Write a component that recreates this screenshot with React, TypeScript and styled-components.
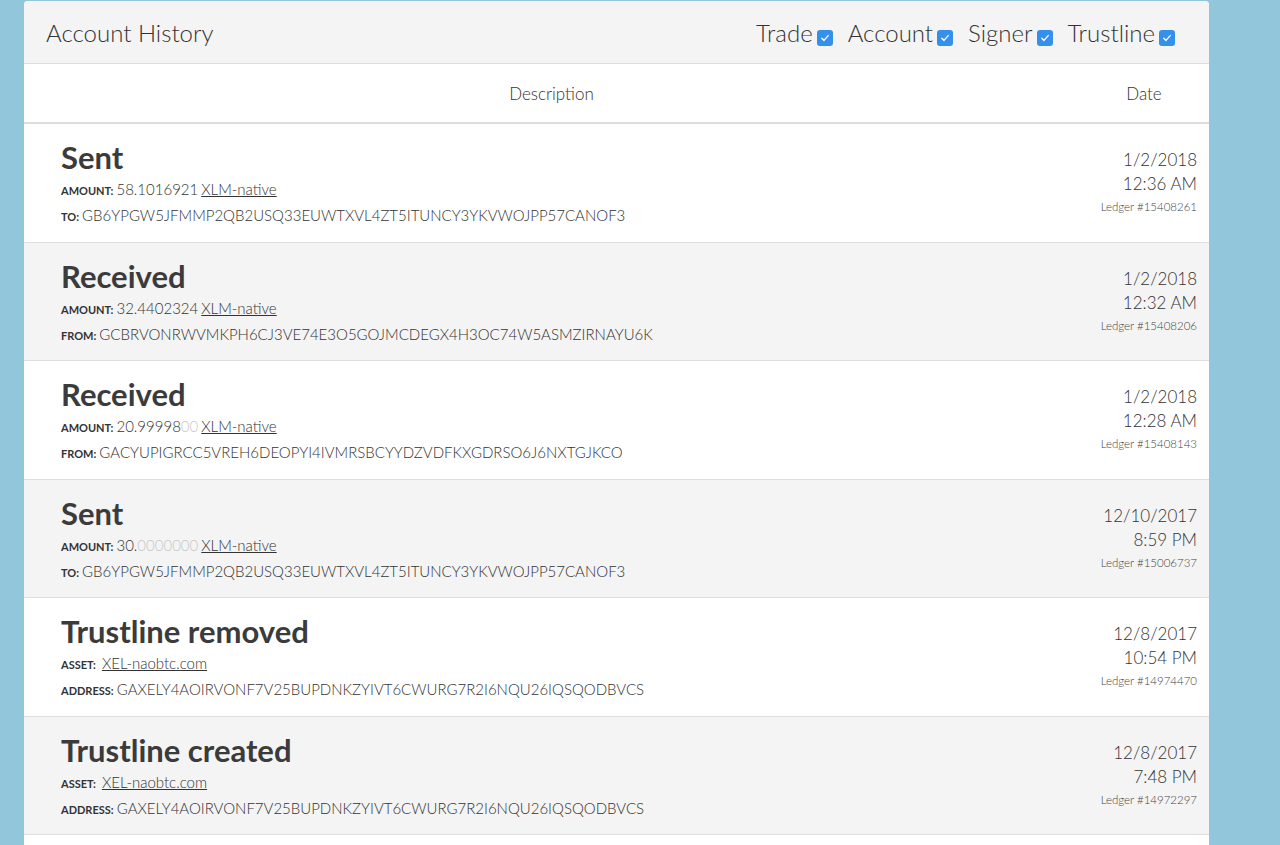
import React from 'react'
import styled, { createGlobalStyle } from 'styled-components'

const GlobalStyle = createGlobalStyle`
  html, body {
    margin: 0;
    padding: 0;
    background: #92c6db;
    font-family: Lato, 'Open Sans', sans-serif;
    color: #444;
  }
`

type Op = {
  title: string
  kind: 'payment' | 'trustline'
  amount?: [string, string]
  party?: string
  asset?: string
  address: string
  date: string
  time: string
  ledger: string
}

const ops: Op[] = [
  {
    title: 'Sent',
    kind: 'payment',
    amount: ['58.1016921', ''],
    party: 'TO',
    address: 'GB6YPGW5JFMMP2QB2USQ33EUWTXVL4ZT5ITUNCY3YKVWOJPP57CANOF3',
    date: '1/2/2018',
    time: '12:36 AM',
    ledger: '15408261',
  },
  {
    title: 'Received',
    kind: 'payment',
    amount: ['32.4402324', ''],
    party: 'FROM',
    address: 'GCBRVONRWVMKPH6CJ3VE74E3O5GOJMCDEGX4H3OC74W5ASMZIRNAYU6K',
    date: '1/2/2018',
    time: '12:32 AM',
    ledger: '15408206',
  },
  {
    title: 'Received',
    kind: 'payment',
    amount: ['20.99998', '00'],
    party: 'FROM',
    address: 'GACYUPIGRCC5VREH6DEOPYI4IVMRSBCYYDZVDFKXGDRSO6J6NXTGJKCO',
    date: '1/2/2018',
    time: '12:28 AM',
    ledger: '15408143',
  },
  {
    title: 'Sent',
    kind: 'payment',
    amount: ['30.', '0000000'],
    party: 'TO',
    address: 'GB6YPGW5JFMMP2QB2USQ33EUWTXVL4ZT5ITUNCY3YKVWOJPP57CANOF3',
    date: '12/10/2017',
    time: '8:59 PM',
    ledger: '15006737',
  },
  {
    title: 'Trustline removed',
    kind: 'trustline',
    asset: 'XEL-naobtc.com',
    address: 'GAXELY4AOIRVONF7V25BUPDNKZYIVT6CWURG7R2I6NQU26IQSQODBVCS',
    date: '12/8/2017',
    time: '10:54 PM',
    ledger: '14974470',
  },
  {
    title: 'Trustline created',
    kind: 'trustline',
    asset: 'XEL-naobtc.com',
    address: 'GAXELY4AOIRVONF7V25BUPDNKZYIVT6CWURG7R2I6NQU26IQSQODBVCS',
    date: '12/8/2017',
    time: '7:48 PM',
    ledger: '14972297',
  },
]

const Page = styled.div`
  padding: 1px 71px 0 24px;
  height: 845px;
  overflow: hidden;
  box-sizing: border-box;
`

const Card = styled.div`
  background: #fff;
  border-radius: 4px 4px 0 0;
  overflow: hidden;
`

const CardHeader = styled.div`
  display: flex;
  align-items: center;
  justify-content: space-between;
  height: 62px;
  padding: 0 34px 0 22px;
  background: #f4f4f4;
  border-bottom: 1px solid #dedede;
`

const Heading = styled.h2`
  margin: 0;
  font-size: 24px;
  font-weight: 300;
  color: #333;
`

const Filters = styled.div`
  display: flex;
  gap: 15px;
`

const FilterLabel = styled.label`
  display: flex;
  align-items: flex-end;
  gap: 4px;
  font-size: 24px;
  font-weight: 300;
  color: #333;
  line-height: 30px;
  padding-top: 2px;
`

const Box = styled.span`
  width: 16px;
  height: 16px;
  margin-bottom: 2px;
  border-radius: 3px;
  background: #3590ec;
  display: flex;
  align-items: center;
  justify-content: center;
`

const TableHead = styled.div`
  display: grid;
  grid-template-columns: 1fr 130px;
  height: 58px;
  align-items: center;
  border-bottom: 2px solid #dcdcdc;
  font-size: 17px;
  font-weight: 300;
  color: #333;
`

const HeadCell = styled.div`
  text-align: center;
`

const Row = styled.div<{ $odd: boolean }>`
  display: grid;
  grid-template-columns: 1fr 200px;
  height: 118.5px;
  box-sizing: border-box;
  padding: 13px 12px 0 37px;
  background: ${p => (p.$odd ? '#f4f4f4' : '#fff')};
  border-bottom: 1px solid #dedede;
`

const OpTitle = styled.div`
  font-size: 31px;
  font-weight: 700;
  color: #3b3b3b;
  line-height: 40px;
`

const Line = styled.div`
  font-size: 15px;
  font-weight: 300;
  color: #333;
  line-height: 25px;
`

const Label = styled.span`
  font-size: 11px;
  font-weight: 700;
  text-transform: uppercase;
  color: #333;
  margin-right: 3px;
`

const Faint = styled.span`
  color: #c8c8c8;
`

const AssetLink = styled.a`
  color: #333;
  text-decoration: underline;
  margin-left: 3px;
`

const DateCell = styled.div`
  text-align: right;
  padding-top: 11px;
  font-size: 17px;
  font-weight: 300;
  color: #333;
  line-height: 24px;
`

const Ledger = styled.div`
  font-size: 11.5px;
  line-height: 22px;
  color: #444;
`

const Check = () => (
  <Box>
    <svg width="10" height="10" viewBox="0 0 10 10">
      <path d="M1.8 5.2 L4 7.4 L8.2 2.6" fill="none" stroke="#fff" strokeWidth="1.4" strokeLinecap="round" strokeLinejoin="round" />
    </svg>
  </Box>
)

const App = () => (
  <Page>
    <GlobalStyle />
    <Card>
      <CardHeader>
        <Heading>Account History</Heading>
        <Filters>
          {['Trade', 'Account', 'Signer', 'Trustline'].map(f => (
            <FilterLabel key={f}>
              {f}
              <Check />
            </FilterLabel>
          ))}
        </Filters>
      </CardHeader>
      <TableHead>
        <HeadCell>Description</HeadCell>
        <HeadCell>Date</HeadCell>
      </TableHead>
      {ops.map((op, i) => (
        <Row key={i} $odd={i % 2 === 1}>
          <div>
            <OpTitle>{op.title}</OpTitle>
            {op.kind === 'payment' ? (
              <>
                <Line>
                  <Label>Amount:</Label>
                  {op.amount![0]}
                  {op.amount![1] && <Faint>{op.amount![1]}</Faint>}
                  <AssetLink>XLM-native</AssetLink>
                </Line>
                <Line>
                  <Label>{op.party}:</Label>
                  {op.address}
                </Line>
              </>
            ) : (
              <>
                <Line>
                  <Label>Asset:</Label>
                  <AssetLink>{op.asset}</AssetLink>
                </Line>
                <Line>
                  <Label>Address:</Label>
                  {op.address}
                </Line>
              </>
            )}
          </div>
          <DateCell>
            {op.date}
            <br />
            {op.time}
            <Ledger>Ledger #{op.ledger}</Ledger>
          </DateCell>
        </Row>
      ))}
      <Row $odd={false} />
    </Card>
  </Page>
)

export default App
